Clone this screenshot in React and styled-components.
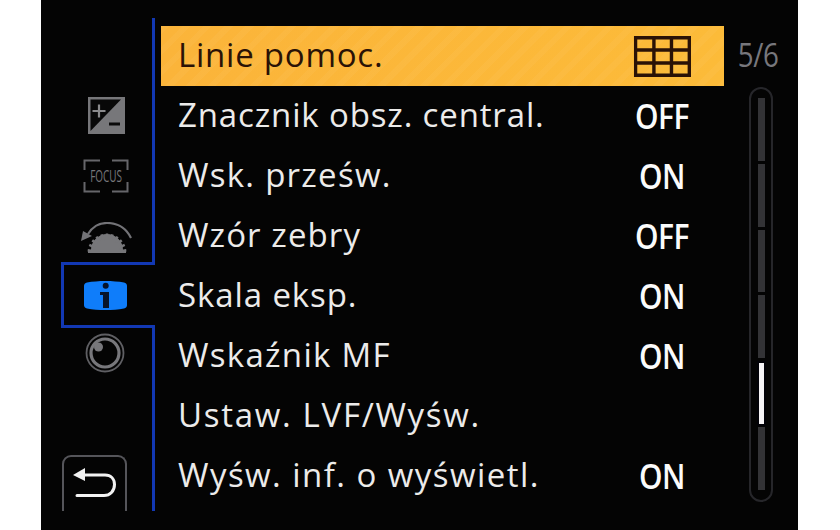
import React from "react";
import styled, { createGlobalStyle } from "styled-components";

const Global = createGlobalStyle`
  html, body { margin: 0; padding: 0; background: #fff; }
  body { width: 840px; height: 530px; overflow: hidden; font-family: "Open Sans", "Noto Sans", sans-serif; }
`;
const Screen = styled.div`
  width: 757px; height: 530px; margin-left: 41px; background: #040404;
  display: flex; box-sizing: border-box;
`;
const Sidebar = styled.nav`
  width: 114px; flex: none; box-sizing: border-box; padding: 18px 0 19px;
  display: flex; flex-direction: column;
`;
const TabGroup = styled.div`
  border-right: 3px solid #1238b4; box-sizing: border-box;
  display: flex; flex-direction: column;
`;
const UpperTabs = styled(TabGroup)`
  height: 244px; padding: 79px 0 0 19px; align-items: center;
`;
const LowerTabs = styled(TabGroup)`
  flex: 1; justify-content: space-between; padding-top: 5px; align-items: flex-start;
`;
const ActiveTab = styled.div`
  height: 66px; margin-left: 20px; box-sizing: border-box;
  border: solid #1238b4; border-width: 3px 0 3px 3px;
  display: flex; align-items: center; padding-left: 20px;
`;
const TabIcon = styled.div`
  height: ${p => p.$h}px; margin-bottom: ${p => p.$mb || 0}px; margin-left: ${p => p.$ml || 0}px;
  display: flex; align-items: center; justify-content: center;
  svg { display: block; }
`;
const BackButton = styled.div`
  width: 65px; height: 56px; margin-left: 21px; box-sizing: border-box;
  border: solid #55555a; border-width: 2px 2px 0 2px; border-radius: 9px 9px 0 0;
  display: flex; align-items: flex-start; justify-content: center; padding-top: 11px;
`;
const Menu = styled.main`
  width: 563px; flex: none; margin-left: 6px; padding-top: 26px;
`;
const Row = styled.div`
  height: 60px; display: flex; align-items: center; justify-content: space-between;
  box-sizing: border-box; padding-left: 17px;
  color: ${p => (p.$active ? "#2a1206" : "#ecebea")};
  background: ${p => (p.$active
    ? "repeating-linear-gradient(135deg, rgba(255,255,255,.035) 0 6px, transparent 6px 15px), linear-gradient(90deg, #fbb43a, #fcbb39)"
    : "transparent")};
  font-size: 33px; font-weight: 400; white-space: nowrap;
`;
const Label = styled.span`
  display: block; position: relative; top: -2px;
  letter-spacing: ${p => p.$track}px;
`;
const Value = styled.span`
  width: 124px; flex: none; display: flex; justify-content: center;
  color: #fbfbfb; font-size: 34px; font-weight: 600; letter-spacing: -0.5px;
  transform: scaleX(0.88);
`;
const Side = styled.aside`
  flex: 1; display: flex; flex-direction: column; align-items: center;
  padding-top: 36px; box-sizing: border-box;
`;
const Page = styled.div`
  color: #77777c; font-size: 33px; line-height: 38px; height: 51px; letter-spacing: -0.5px;
  margin-right: 5px; transform: scaleX(0.84);
`;
const Track = styled.div`
  width: 24px; height: 415px; box-sizing: border-box; border: 2px solid #26262a; border-radius: 12px;
  padding: 9px 6px 10px 7px;
`;
const Rail = styled.div`
  height: 100%; position: relative; display: flex; flex-direction: column; gap: 3px;
`;
const Segment = styled.div`
  flex: 1; background: #333336;
`;
const Thumb = styled.div`
  position: absolute; left: -1px; right: -1px; top: 263px; height: 65px;
  background: #f6f4f6; border: 2px solid #020208; box-sizing: border-box;
`;

const ExposureIcon = () => (
  <svg width="37" height="37" viewBox="0 0 37 37">
    <rect width="37" height="37" fill="#77777a" />
    <path d="M2.500 2.500H33L2.500 34Z" fill="#080808" />
    <path d="M4.500 14H17.500M11 7.500V20.500" stroke="#8a8a8c" strokeWidth="2.200" fill="none" />
    <path d="M21 27H32" stroke="#0a0a0a" strokeWidth="3" fill="none" />
  </svg>
);
const FocusIcon = () => (
  <svg width="46" height="34" viewBox="0 0 46 34">
    <path d="M17 1.500H1.500V11M29 1.500H44.500V11M1.500 23V32.500H17M44.500 23V32.500H29" stroke="#66666a" strokeWidth="2" fill="none" />
    <g transform="translate(23 23) scale(0.62 1)">
      <text x="0" y="0" textAnchor="middle" fontFamily="'Open Sans',sans-serif" fontSize="16" fill="#77777a">FOCUS</text>
    </g>
  </svg>
);
const teeth = Array.from({ length: 11 }, (_, i) => {
  const a = Math.PI + (Math.PI * (i + 0.5)) / 11;
  const c = Math.cos(a), s = Math.sin(a);
  return `M${27 + 13 * c} ${31 + 13 * s}L${27 + 19.500 * c} ${31 + 19.500 * s}`;
}).join("");
const DialIcon = () => (
  <svg width="52" height="32" viewBox="0 0 52 32">
    <path d="M51 16C46 6 37 1 27 1C19 1 13 4 8 12" stroke="#737377" strokeWidth="2.200" fill="none" />
    <path d="M1 19L3 9L12 14Z" fill="#737377" />
    <path d="M8 31V28H11A16 16 0 0 1 43 28H46V31Z" fill="#77777a" />
    <path d={teeth} stroke="#77777a" strokeWidth="2.500" fill="none" />
  </svg>
);
const InfoIcon = () => (
  <svg width="43" height="31" viewBox="0 0 43 31">
    <path d="M3 2.500C14 0.500 29 0.500 40 2.500C42 3 43 4 43 6V25C43 27 42 28 40 28.500C29 30.500 14 30.500 3 28.500C1 28 0 27 0 25V6C0 4 1 3 3 2.500Z" fill="#0f7dfa" />
    <circle cx="21.700" cy="5.700" r="3" fill="#07142a" />
    <path d="M16 12H25V28H19V15H16Z" fill="#07142a" />
  </svg>
);
const LensIcon = () => (
  <svg width="40" height="40" viewBox="0 0 40 40">
    <circle cx="20" cy="20" r="18.500" stroke="#5f5f63" strokeWidth="1.800" fill="none" />
    <circle cx="20" cy="20" r="14" stroke="#77777b" strokeWidth="3.200" fill="#040404" />
    <circle cx="13.500" cy="14" r="4.500" fill="#77777b" />
  </svg>
);
const BackIcon = () => (
  <svg width="44" height="32" viewBox="0 0 44 32">
    <path d="M11 7H32C38 7 41.500 11 41.500 16.500C41.500 23 37 27.500 31 27.500H4" stroke="#f2f2f2" strokeWidth="3" fill="none" strokeLinecap="round" />
    <path d="M0 7L12 0V13Z" fill="#f2f2f2" />
  </svg>
);
const GridIcon = () => (
  <svg width="65" height="41" viewBox="0 0 57 41" preserveAspectRatio="none">
    <path d="M1.700 1.700H55.300V39.300H1.700ZM1.700 14H55.300M1.700 27H55.300M20 1.700V39.300M37.500 1.700V39.300" stroke="#2a1206" strokeWidth="3.400" fill="none" />
  </svg>
);

const rows = [
  { label: "Linie pomoc.", track: 0.77, value: <GridIcon />, active: true },
  { label: "Znacznik obsz. central.", track: 0.86, value: "OFF" },
  { label: "Wsk. prześw.", track: 1.27, value: "ON" },
  { label: "Wzór zebry", track: 1.1, value: "OFF" },
  { label: "Skala eksp.", track: 0.9, value: "ON" },
  { label: "Wskaźnik MF", track: 1.3, value: "ON" },
  { label: "Ustaw. LVF/Wyśw.", track: 1.7 },
  { label: "Wyśw. inf. o wyświetl.", track: 1.45, value: "ON" },
];

export default function App() {
  return (
    <>
      <Global />
      <Screen>
        <Sidebar>
          <UpperTabs>
            <TabIcon $h={37} $mb={25}><ExposureIcon /></TabIcon>
            <TabIcon $h={34} $mb={29}><FocusIcon /></TabIcon>
            <TabIcon $h={32}><DialIcon /></TabIcon>
          </UpperTabs>
          <ActiveTab><InfoIcon /></ActiveTab>
          <LowerTabs>
            <TabIcon $h={40} $ml={44}><LensIcon /></TabIcon>
            <BackButton><BackIcon /></BackButton>
          </LowerTabs>
        </Sidebar>
        <Menu>
          {rows.map(r => (
            <Row key={r.label} $active={r.active}>
              <Label $track={r.track}>{r.label}</Label>
              {r.value && <Value>{r.value}</Value>}
            </Row>
          ))}
        </Menu>
        <Side>
          <Page>5/6</Page>
          <Track>
            <Rail>
              {[0, 1, 2, 3, 4, 5].map(i => <Segment key={i} />)}
              <Thumb />
            </Rail>
          </Track>
        </Side>
      </Screen>
    </>
  );
}
